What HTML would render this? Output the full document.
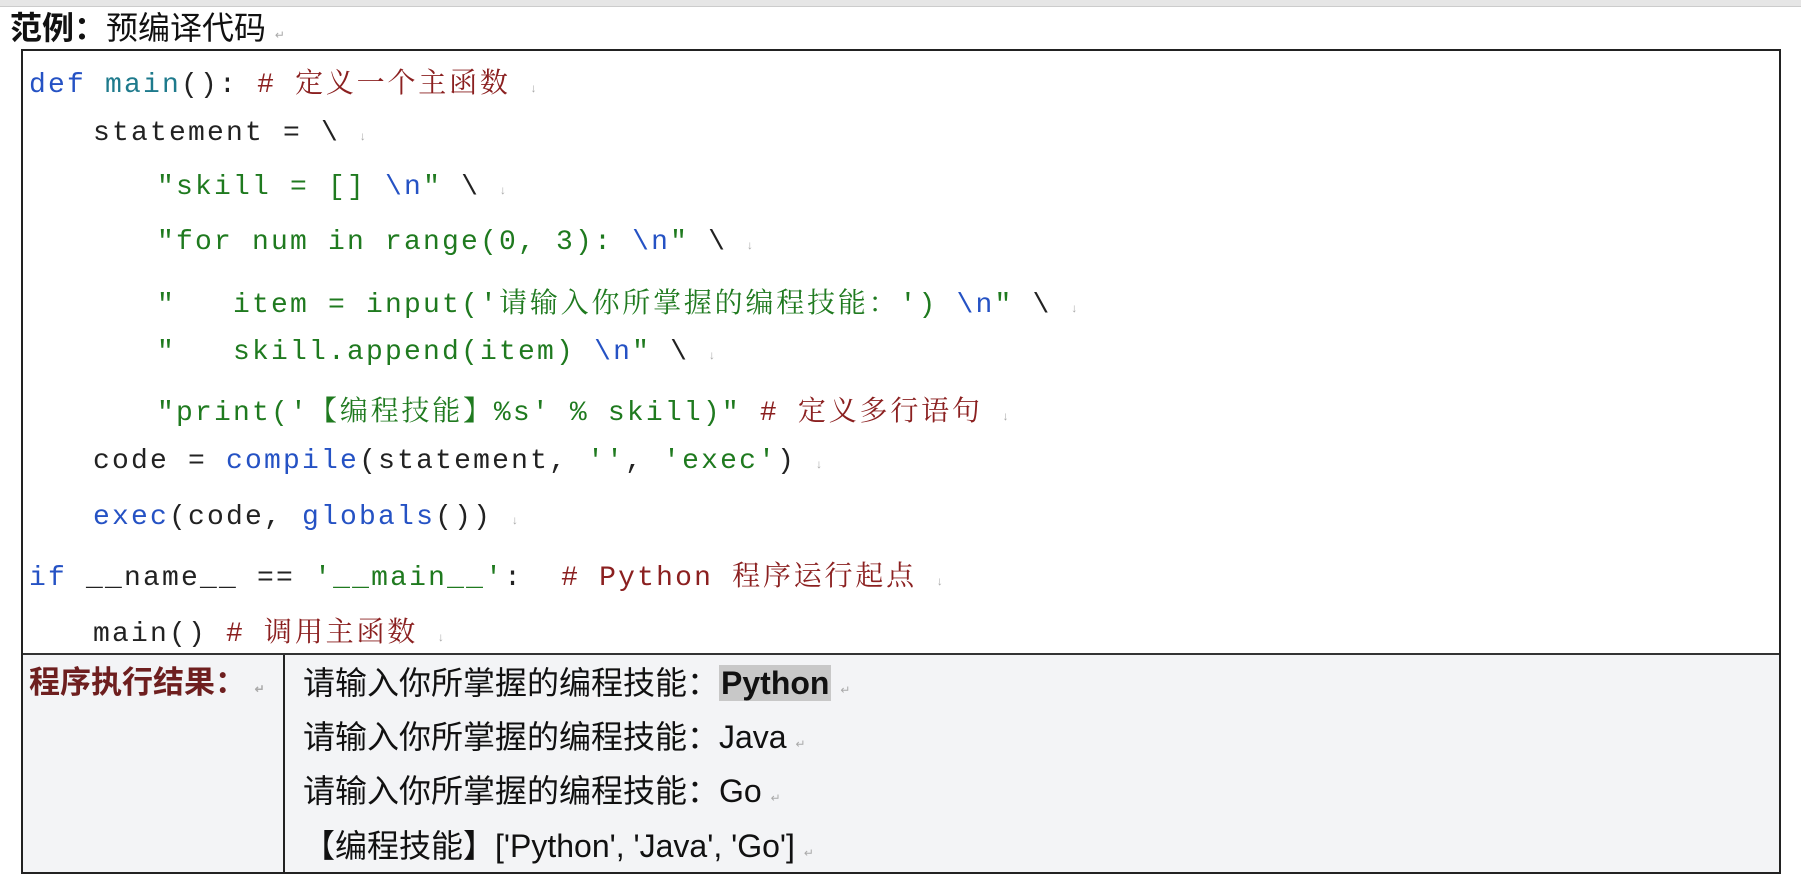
<!DOCTYPE html>
<html><head><meta charset="utf-8"><style>
body{margin:0;width:1801px;height:879px;background:#fff;position:relative;overflow:hidden;font-family:"Liberation Sans","Noto Sans CJK SC",sans-serif}
.top{position:absolute;left:0;top:0;width:1801px;height:6px;background:#e6e6e6;border-bottom:1px solid #ccc}
.title{position:absolute;left:10px;top:8px;font-size:32px;line-height:40px;color:#111}
.tbl{position:absolute;left:21px;top:49px;width:1760px;height:825px;border:2px solid #222;box-sizing:border-box}
.code{position:absolute;left:0;top:0;width:1756px;height:602px;background:#fff;border-bottom:2px solid #333}
.out{position:absolute;left:0;top:604px;width:1756px;height:217px;background:#f3f4f6}
.vd{position:absolute;left:260px;top:0;width:2px;height:217px;background:#222}
.ln{position:absolute;font-family:"Liberation Mono","Noto Serif CJK SC",monospace;font-size:28px;letter-spacing:2.2px;white-space:pre;line-height:40px;color:#222}
.cj{font-family:"Noto Serif CJK SC",serif;letter-spacing:2.8px}
.k{color:#2552c4}.f{color:#1e7a8c}.s{color:#1f7a1f}.c{color:#8b2020}
.pm{color:#aaa;font-size:12px;letter-spacing:0}
.o{position:absolute;left:280px;font-size:32px;line-height:44px;white-space:nowrap;color:#111}
.lab{position:absolute;left:6px;top:6px;font-size:31px;font-weight:bold;color:#6e1f1f;line-height:44px}
.hl{background:#c8c8c8;font-weight:bold;padding:0 2px}
</style></head><body>
<div class="top"></div>
<div class="title"><b>范例：</b>预编译代码 <span class="pm">↵</span></div>
<div class="tbl">
<div class="code">
<div class="ln" style="left:6px;top:10px"><span class="k">def</span> <span class="f">main</span>(): <span class="c"># <span class="cj">定义一个主函数</span></span> <span class="pm">↓</span></div>
<div class="ln" style="left:70px;top:63px">statement = \ <span class="pm">↓</span></div>
<div class="ln" style="left:134px;top:117px"><span class="s">"skill = [] </span><span class="k">\n</span><span class="s">"</span> \ <span class="pm">↓</span></div>
<div class="ln" style="left:134px;top:172px"><span class="s">"for num in range(0, 3): </span><span class="k">\n</span><span class="s">"</span> \ <span class="pm">↓</span></div>
<div class="ln" style="left:134px;top:230px"><span class="s">"   item = input('<span class="cj">请输入你所掌握的编程技能：</span>') </span><span class="k">\n</span><span class="s">"</span> \ <span class="pm">↓</span></div>
<div class="ln" style="left:134px;top:282px"><span class="s">"   skill.append(item) </span><span class="k">\n</span><span class="s">"</span> \ <span class="pm">↓</span></div>
<div class="ln" style="left:134px;top:338px"><span class="s">"print('<span class="cj">【编程技能】</span>%s' % skill)"</span> <span class="c"># <span class="cj">定义多行语句</span></span> <span class="pm">↓</span></div>
<div class="ln" style="left:70px;top:391px">code = <span class="k">compile</span>(statement, <span class="s">''</span>, <span class="s">'exec'</span>) <span class="pm">↓</span></div>
<div class="ln" style="left:70px;top:447px"><span class="k">exec</span>(code, <span class="k">globals</span>()) <span class="pm">↓</span></div>
<div class="ln" style="left:6px;top:503px"><span class="k">if</span> __name__ == <span class="s">'__main__'</span>:  <span class="c"># Python <span class="cj">程序运行起点</span></span> <span class="pm">↓</span></div>
<div class="ln" style="left:70px;top:559px">main() <span class="c"># <span class="cj">调用主函数</span></span> <span class="pm">↓</span></div>
</div>
<div class="out">
<div class="lab">程序执行结果： <span class="pm">↵</span></div>
<div class="vd"></div>
<div class="o" style="top:6px">请输入你所掌握的编程技能：<span class="hl">Python</span> <span class="pm">↵</span></div>
<div class="o" style="top:60px">请输入你所掌握的编程技能：Java <span class="pm">↵</span></div>
<div class="o" style="top:114px">请输入你所掌握的编程技能：Go <span class="pm">↵</span></div>
<div class="o" style="top:169px">【编程技能】['Python', 'Java', 'Go'] <span class="pm">↵</span></div>
</div>
</div>
</body></html>
